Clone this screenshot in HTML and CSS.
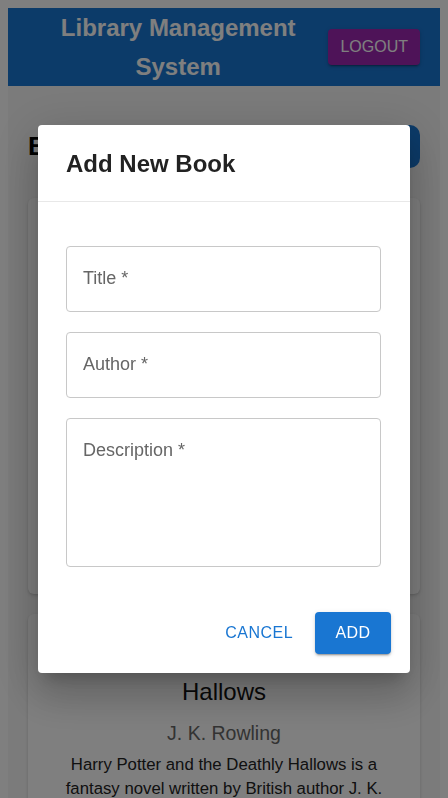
FILE: index.html
```html
<!DOCTYPE html>
<html lang="en">
<head>
<meta charset="utf-8">
<title>Library Management System</title>
<link rel="stylesheet" href="styles.css">
</head>
<body>
<div class="app">
  <header class="topbar">
    <h1 class="brand">Library Management System</h1>
    <button class="logout" type="button">LOGOUT</button>
  </header>
  <main class="content">
    <div class="toolbar">
      <h2 class="page-title">Books</h2>
      <button class="add-book" type="button">ADD BOOK</button>
    </div>
    <section class="book-list">
      <article class="card">
        <div class="cover"></div>
      </article>
      <article class="card">
        <h3 class="book-title">Harry Potter and the Deathly Hallows</h3>
        <p class="book-author">J. K. Rowling</p>
        <p class="book-desc">Harry Potter and the Deathly Hallows is a fantasy novel written by British author J. K. Rowling.</p>
      </article>
    </section>
  </main>
</div>

<div class="backdrop">
  <div class="dialog" role="dialog" aria-labelledby="dlg-title">
    <h2 class="dialog-title" id="dlg-title">Add New Book</h2>
    <div class="dialog-content">
      <div class="field"><span class="field-label">Title *</span></div>
      <div class="field"><span class="field-label">Author *</span></div>
      <div class="field field-multi"><span class="field-label">Description *</span></div>
    </div>
    <div class="dialog-actions">
      <button class="btn-text" type="button">CANCEL</button>
      <button class="btn-contained" type="button">ADD</button>
    </div>
  </div>
</div>
</body>
</html>
```

FILE: styles.css
```css
html, body {
  height: 100%;
}
body {
  margin: 8px;
  background: #ffffff;
  font-family: "Liberation Sans", Arial, sans-serif;
  color: #111;
  overflow: hidden;
}
button {
  font-family: inherit;
  border: 0;
  cursor: pointer;
}

/* top bar */
.topbar {
  display: flex;
  align-items: center;
  padding: 0 20px;
  background: #1976d2;
  box-shadow: 0 1px 3px rgba(0,0,0,0.2);
}
.brand {
  flex: 1;
  margin: 0;
  padding-top: 1px;
  text-align: center;
  font-size: 24px;
  line-height: 38.5px;
  font-weight: bold;
  color: #ffffff;
}
.logout {
  height: 36px;
  padding: 0 12px;
  background: #9c27b0;
  color: #ffffff;
  font-size: 16px;
  border-radius: 4px;
  box-shadow: 0 3px 1px -2px rgba(0,0,0,0.2), 0 2px 2px 0 rgba(0,0,0,0.14), 0 1px 5px 0 rgba(0,0,0,0.12);
}

/* page */
.content {
  background: #f7f7f7;
  padding: 39px 20px 20px;
  min-height: 800px;
}
.toolbar {
  display: flex;
  align-items: center;
  justify-content: space-between;
  height: 43px;
  margin-bottom: 30px;
}
.page-title {
  margin: 0;
  font-size: 26px;
  font-weight: bold;
  color: #000;
}
.add-book {
  width: 145px;
  height: 43px;
  background: #1976d2;
  color: #ffffff;
  font-size: 16px;
  border-radius: 10px;
}
.book-list {
  display: flex;
  flex-direction: column;
  gap: 20px;
}
.card {
  background: #ffffff;
  border-radius: 6px;
  box-shadow: 0 2px 4px rgba(0,0,0,0.12), 0 1px 2px rgba(0,0,0,0.08);
  min-height: 396px;
  box-sizing: border-box;
  padding: 21px 16px 16px;
  text-align: center;
}
.cover {
  height: 200px;
  background: #eeeeee;
  border-radius: 4px;
}
.book-title {
  margin: 0;
  font-size: 24px;
  line-height: 38px;
  font-weight: normal;
  color: #111;
}
.book-author {
  margin: 10px 0 0;
  font-size: 19.5px;
  line-height: 24px;
  color: #666;
}
.book-desc {
  margin: 8px 0 0;
  font-size: 16.75px;
  line-height: 24px;
  color: #222;
}

/* dialog */
.backdrop {
  position: fixed;
  inset: 0;
  background: rgba(0,0,0,0.5);
  display: flex;
  align-items: center;
  justify-content: center;
}
.dialog {
  width: 372px;
  background: #ffffff;
  border-radius: 4px;
  box-shadow: 0 11px 15px -7px rgba(0,0,0,0.2), 0 24px 38px 3px rgba(0,0,0,0.14), 0 9px 46px 8px rgba(0,0,0,0.12);
}
.dialog-title {
  margin: 0;
  padding: 24px 28px 23px;
  font-size: 24px;
  line-height: 29px;
  font-weight: bold;
  color: #222;
  border-bottom: 1px solid #e8e8e8;
}
.dialog-content {
  display: flex;
  flex-direction: column;
  gap: 20px;
  padding: 44px 29px 0 28px;
}
.field {
  box-sizing: border-box;
  height: 66px;
  padding: 20px 16px 0;
  border: 1px solid #c8c8c8;
  border-radius: 4px;
}
.field-multi {
  height: 149px;
}
.field-label {
  display: block;
  font-size: 18px;
  line-height: 22px;
  color: #666;
}
.dialog-actions {
  display: flex;
  justify-content: flex-end;
  align-items: center;
  gap: 10px;
  padding: 45px 19px 19px;
}
.btn-text {
  height: 42px;
  padding: 0 12px;
  background: transparent;
  color: #1976d2;
  font-size: 16px;
  letter-spacing: 0.02857em;
}
.btn-contained {
  height: 42px;
  width: 76px;
  padding: 0;
  background: #1976d2;
  color: #ffffff;
  font-size: 16px;
  letter-spacing: 0.02857em;
  border-radius: 4px;
  box-shadow: 0 3px 1px -2px rgba(0,0,0,0.2), 0 2px 2px 0 rgba(0,0,0,0.14), 0 1px 5px 0 rgba(0,0,0,0.12);
}
```
